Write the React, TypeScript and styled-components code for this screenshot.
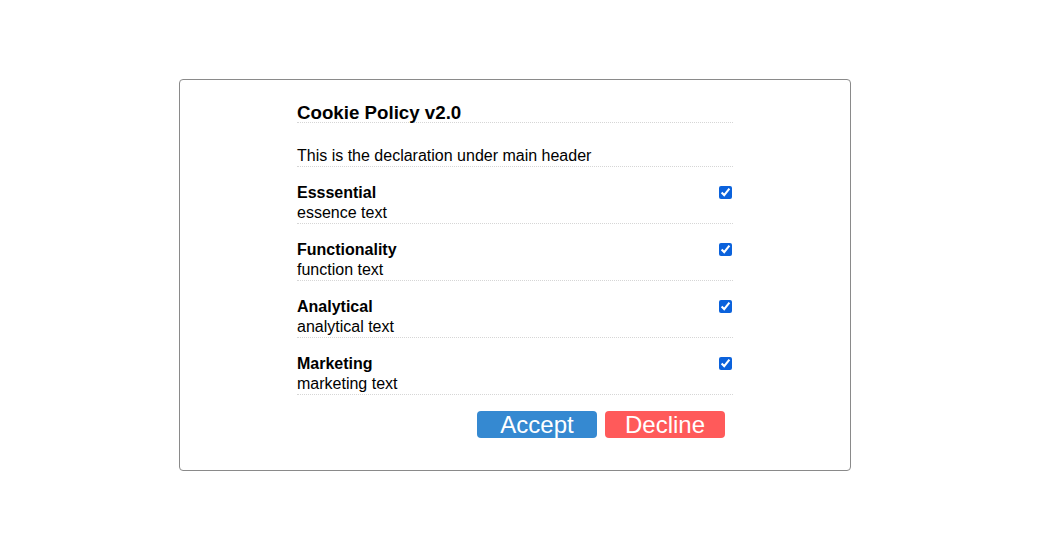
import React from "react";
import styled, { createGlobalStyle } from "styled-components";

const Global = createGlobalStyle`
  html, body { margin: 0; padding: 0; background: #fff; }
  body { font-family: "Liberation Sans", Arial, sans-serif; color: #000; }
`;

const Page = styled.div`
  padding: 79px 0 0 179px;
`;

const Dialog = styled.div`
  box-sizing: border-box;
  width: 672px;
  height: 392px;
  border: 1px solid #8a8a8a;
  border-radius: 4px;
  padding: 23px 117px 0 117px;
`;

const Title = styled.h1`
  margin: 0;
  font-size: 18.72px;
  font-weight: bold;
  line-height: 19px;
  border-bottom: 1px dotted #d6d6d6;
`;

const Declaration = styled.p`
  margin: 24px 0 0;
  font-size: 16px;
  line-height: 18px;
  padding-bottom: 1px;
  border-bottom: 1px dotted #d6d6d6;
`;

const Row = styled.div`
  display: flex;
  justify-content: space-between;
  align-items: flex-start;
  margin-top: 16px;
  border-bottom: 1px dotted #d6d6d6;
`;

const RowText = styled.div`
  display: flex;
  flex-direction: column;
  font-size: 16px;
  line-height: 20px;
`;

const RowTitle = styled.strong`
  font-weight: bold;
`;

const Check = styled.input`
  width: 13px;
  height: 13px;
  margin: 3px 1px 0 0;
  accent-color: #0b62dc;
`;

const Actions = styled.div`
  display: flex;
  justify-content: flex-end;
  gap: 8px;
  margin-top: 16px;
  padding-right: 8px;
`;

const Button = styled.button<{ $tone: "accept" | "decline" }>`
  width: 120px;
  height: 27px;
  border: none;
  border-radius: 4px;
  padding: 0;
  font-family: "Liberation Sans", Arial, sans-serif;
  font-size: 24px;
  line-height: 27px;
  color: #fff;
  background: ${(p) => (p.$tone === "accept" ? "#3589d1" : "#ff5a5a")};
  cursor: pointer;
`;

const items = [
  { title: "Esssential", text: "essence text" },
  { title: "Functionality", text: "function text" },
  { title: "Analytical", text: "analytical text" },
  { title: "Marketing", text: "marketing text" },
];

export default function App() {
  return (
    <>
      <Global />
      <Page>
        <Dialog>
          <Title>Cookie Policy v2.0</Title>
          <Declaration>This is the declaration under main header</Declaration>
          {items.map((it) => (
            <Row key={it.title}>
              <RowText>
                <RowTitle>{it.title}</RowTitle>
                <span>{it.text}</span>
              </RowText>
              <Check type="checkbox" defaultChecked />
            </Row>
          ))}
          <Actions>
            <Button $tone="accept">Accept</Button>
            <Button $tone="decline">Decline</Button>
          </Actions>
        </Dialog>
      </Page>
    </>
  );
}
